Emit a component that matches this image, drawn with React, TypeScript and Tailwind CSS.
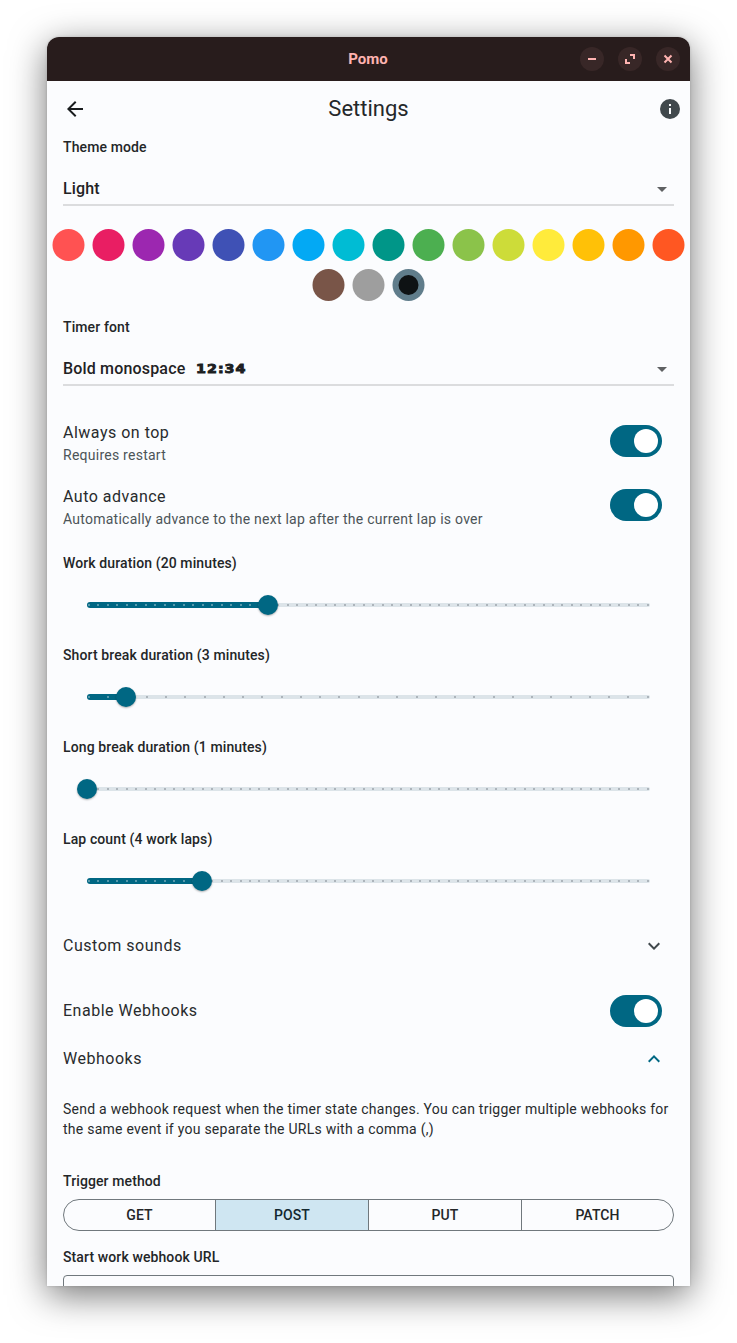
import React from "react";

const swatches = [
  "bg-[#ff5252]", "bg-[#e91e63]", "bg-[#9c27b0]", "bg-[#673ab7]", "bg-[#3f51b5]",
  "bg-[#2196f3]", "bg-[#03a9f4]", "bg-[#00bcd4]", "bg-[#009688]", "bg-[#4caf50]",
  "bg-[#8bc34a]", "bg-[#cddc39]", "bg-[#ffeb3b]", "bg-[#ffc107]", "bg-[#ff9800]",
  "bg-[#ff5722]", "bg-[#795548]", "bg-[#9e9e9e]", "bg-[#607d8b]",
];
const selectedSwatch = 18;

function Label({ children }: { children: React.ReactNode }) {
  return <div className="h-5 text-[14px] font-medium leading-5 tracking-[0.11px] text-[#232628]">{children}</div>;
}

function Select({ children }: { children: React.ReactNode }) {
  return (
    <div className="flex h-[34px] items-center justify-between border-b-2 border-[#dbdcde] pr-[7px] text-[16px] font-medium leading-6 tracking-[0.17px] text-[#1f2224]">
      <span className="flex items-center pt-0.5">{children}</span>
      <svg width="10" height="5" viewBox="0 0 10 5" className="mt-0.5 fill-[#5f6163]">
        <path d="M0 0h10L5 5z" />
      </svg>
    </div>
  );
}

function Toggle() {
  return (
    <div role="switch" aria-checked="true" className="flex h-8 w-[52px] items-center justify-end rounded-full bg-[#006783] p-1">
      <div className="size-6 rounded-full bg-white" />
    </div>
  );
}

function ToggleRow({ title, detail }: { title: string; detail: string }) {
  return (
    <div className="flex h-16 items-center justify-between pr-3">
      <div className="pt-1">
        <div className="text-[16px] leading-6 tracking-[0.5px] text-[#282b2d]">{title}</div>
        <div className="text-[14px] leading-5 tracking-[0.25px] text-[#4c5458]">{detail}</div>
      </div>
      <Toggle />
    </div>
  );
}

function Ticks({ count, className }: { count: number; className: string }) {
  return (
    <div className="flex h-full w-[563px] items-center justify-between px-px">
      {Array.from({ length: count }, (_, i) => (
        <span key={i} className={`size-0.5 rounded-full ${className}`} />
      ))}
    </div>
  );
}

function Slider({ label, steps, value }: { label: string; steps: number; value: number }) {
  const percent = `${(value / steps) * 100}%`;
  return (
    <div className="h-[92px]">
      <Label>{label}</Label>
      <div className="ml-6 mt-2 flex h-12 w-[563px] items-center">
        <div className="relative h-1 w-full rounded-full bg-[#dce4e9]">
          <Ticks count={steps + 1} className="bg-[#9ca5ab]" />
          <div className="absolute -top-px left-0 h-1.5 overflow-hidden rounded-full bg-[#006783]" style={{ width: percent }}>
            <Ticks count={steps + 1} className="bg-[#73a8b9]" />
          </div>
          <div
            className="absolute -top-2 size-5 -translate-x-1/2 rounded-full bg-[#006783] shadow-[0_1px_2px_rgba(0,0,0,0.3)]"
            style={{ left: percent }}
          />
        </div>
      </div>
    </div>
  );
}

function Chevron({ up }: { up?: boolean }) {
  return (
    <svg width="24" height="24" viewBox="0 0 24 24" className={up ? "fill-[#006783]" : "fill-[#40484c]"}>
      <path d={up ? "M12 8l-6 6 1.41 1.41L12 10.83l4.59 4.58L18 14z" : "M16.59 8.59 12 13.17 7.41 8.59 6 10l6 6 6-6z"} />
    </svg>
  );
}

function WindowButton({ children }: { children: React.ReactNode }) {
  return (
    <button className="flex size-6 items-center justify-center rounded-full bg-[#382727]">
      <svg width="12" height="12" viewBox="0 0 12 12" fill="none" strokeWidth="2" className="stroke-[#ffb3b1]">
        {children}
      </svg>
    </button>
  );
}

export default function App() {
  return (
    <div className="h-[1343px] w-[737px] overflow-hidden bg-white px-[47px] pt-[37px] font-['Roboto',sans-serif] text-[#191c1e]">
      <div className="flex h-[1249px] w-[643px] flex-col rounded-t-[12px] shadow-[0_0_3px_rgba(0,0,0,0.15),0_9px_36px_rgba(0,0,0,0.55)]">
        <header className="grid h-11 shrink-0 grid-cols-[1fr_auto_1fr] items-center rounded-t-[12px] bg-[#281c1c] px-2.5">
          <span />
          <h1 className="pr-px text-[15px] font-bold leading-5 text-[#ffb3b1]">Pomo</h1>
          <div className="flex justify-end gap-3.5">
            <WindowButton><path d="M2 6h8" /></WindowButton>
            <WindowButton><path d="M6 2h4v4M2 6v4h4" /></WindowButton>
            <WindowButton><path d="m2.5 2.5 7 7m0-7-7 7" /></WindowButton>
          </div>
        </header>

        <main className="min-h-0 flex-1 overflow-hidden bg-[#fbfcfe]">
          <div className="grid h-14 grid-cols-[1fr_auto_1fr] items-center pl-2 pr-2">
            <svg width="24" height="24" viewBox="0 0 24 24" className="ml-2 fill-[#191c1e]">
              <path d="M20 11H7.83l5.59-5.59L12 4l-8 8 8 8 1.41-1.41L7.83 13H20z" />
            </svg>
            <h2 className="text-[22px] leading-7 text-[#25282a]">Settings</h2>
            <svg width="24" height="24" viewBox="0 0 24 24" className="justify-self-end fill-[#40484c]">
              <path d="M12 2a10 10 0 1 0 0 20 10 10 0 0 0 0-20zm1 15h-2v-6h2zm0-8h-2V7h2z" />
            </svg>
          </div>

          <section className="px-4">
            <Label>Theme mode</Label>
            <div className="pt-[15px]"><Select>Light</Select></div>
          </section>

          <div className="mt-[19px] flex translate-x-[0.5px] flex-wrap justify-center pr-px">
            {swatches.map((color, i) => (
              <div key={color} className="flex size-10 items-center justify-center">
                <div className={`flex size-8 items-center justify-center rounded-full ${color}`}>
                  {i === selectedSwatch && <div className="size-5 rounded-full bg-[#0e1214]" />}
                </div>
              </div>
            ))}
          </div>

          <section className="px-4 pt-3">
            <Label>Timer font</Label>
            <div className="pt-[15px]">
              <Select>
                Bold monospace
                <span className="ml-[11px] origin-left scale-x-[1.14] font-['DejaVu_Sans'] text-[12.5px] font-bold leading-5 tracking-[0.9px] [-webkit-text-stroke:0.9px_#191c1e]">12:34</span>
              </Select>
            </div>

            <div className="pt-[23px]">
              <ToggleRow title="Always on top" detail="Requires restart" />
              <ToggleRow title="Auto advance" detail="Automatically advance to the next lap after the current lap is over" />
            </div>

            <div className="pt-4">
              <Slider label="Work duration (20 minutes)" steps={59} value={19} />
              <Slider label="Short break duration (3 minutes)" steps={29} value={2} />
              <Slider label="Long break duration (1 minutes)" steps={59} value={0} />
              <Slider label="Lap count (4 work laps)" steps={59} value={12} />
            </div>

            <div className="flex h-[49px] items-center justify-between pr-2 text-[16px] tracking-[0.52px] text-[#282b2d]">
              Custom sounds
              <Chevron />
            </div>
            <div className="mt-4 flex h-[49px] items-center justify-between pr-3 text-[16px] tracking-[0.52px] text-[#282b2d]">
              Enable Webhooks
              <Toggle />
            </div>
            <div className="flex h-12 items-center justify-between pr-2 text-[16px] tracking-[0.52px] text-[#282b2d]">
              Webhooks
              <Chevron up />
            </div>

            <p className="mt-4 w-[611px] text-[14px] leading-5 tracking-[0.25px] text-[#282b2d]">
              Send a webhook request when the timer state changes. You can trigger multiple webhooks for the same event if you separate the URLs with a comma (,)
            </p>

            <div className="mt-8">
              <Label>Trigger method</Label>
            </div>
            <div className="mt-2 grid h-8 grid-cols-[151px_153px_153px_152px] overflow-hidden rounded-full border border-[#70787d] text-center text-[14px] font-medium leading-[30px] tracking-[0.1px] text-[#232628]">
              <div>GET</div>
              <div className="border-l border-[#70787d] bg-[#cfe6f2] text-[#142830]">POST</div>
              <div className="border-l border-[#70787d]">PUT</div>
              <div className="border-l border-[#70787d]">PATCH</div>
            </div>
            <div className="mt-4">
              <Label>Start work webhook URL</Label>
            </div>
            <div className="mt-2 h-14 rounded border border-[#70787d]" />
          </section>
        </main>
      </div>
    </div>
  );
}
